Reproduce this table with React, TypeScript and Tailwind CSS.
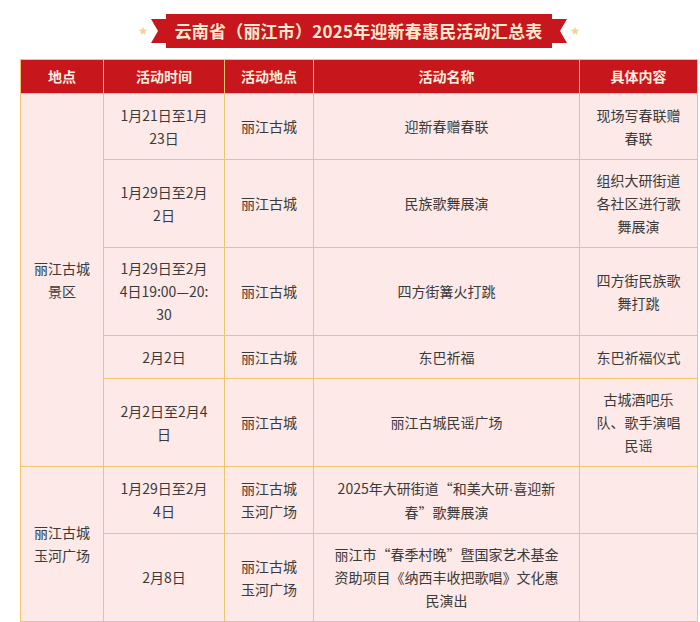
import React from "react";

const font = { fontFamily: '"Noto Sans CJK SC", "Noto Sans", sans-serif' };

const Star: React.FC = () => (
  <svg width="10" height="10" viewBox="0 0 24 24" className="shrink-0">
    <path
      d="M12 2l2.9 6.6 7.1.6-5.4 4.7 1.6 7.1L12 17.3 5.8 21l1.6-7.1L2 9.2l7.1-.6z"
      fill="#f1d39a"
    />
  </svg>
);

const Tail: React.FC<{ side: "left" | "right" }> = ({ side }) => (
  <svg width="15" height="24" viewBox="0 0 15 24" className="shrink-0">
    {side === "left" ? (
      <polygon points="0,0 15,0 15,24 0,24 7,12" fill="#c7161e" />
    ) : (
      <polygon points="0,0 15,0 8,12 15,24 0,24" fill="#c7161e" />
    )}
  </svg>
);

type Row = {
  time: React.ReactNode;
  place: React.ReactNode;
  name: React.ReactNode;
  detail: React.ReactNode;
  h: string;
};

const rows: Row[] = [
  { time: <>1月21日至1月<br />23日</>, place: "丽江古城", name: "迎新春赠春联", detail: <>现场写春联赠<br />春联</>, h: "h-[66px]" },
  { time: <>1月29日至2月<br />2日</>, place: "丽江古城", name: "民族歌舞展演", detail: <>组织大研街道<br />各社区进行歌<br />舞展演</>, h: "h-[88px]" },
  { time: <>1月29日至2月<br />4日19:00—20:<br />30</>, place: "丽江古城", name: "四方街篝火打跳", detail: <>四方街民族歌<br />舞打跳</>, h: "h-[88px]" },
  { time: "2月2日", place: "丽江古城", name: "东巴祈福", detail: "东巴祈福仪式", h: "h-[43px]" },
  { time: <>2月2日至2月4<br />日</>, place: "丽江古城", name: "丽江古城民谣广场", detail: <>古城酒吧乐<br />队、歌手演唱<br />民谣</>, h: "h-[88px]" },
  {
    time: <>1月29日至2月<br />4日</>,
    place: <>丽江古城<br />玉河广场</>,
    name: (
      <>
        2025年大研街道“和美大研<span className="font-['Liberation_Sans']">·</span>喜迎新<br />春”歌舞展演
      </>
    ),
    detail: "",
    h: "h-[67px]",
  },
  { time: "2月8日", place: <>丽江古城<br />玉河广场</>, name: <>丽江市“春季村晚”暨国家艺术基金<br />资助项目《纳西丰收把歌唱》文化惠<br />民演出</>, detail: "", h: "h-[88px]" },
];

const td = "border border-[#f0c46c] text-center align-middle px-2 text-[14px] leading-[23px] text-[#3a3a3a]";
const th = "border border-[#f0c46c] text-center align-middle text-[14px] font-bold text-[#ffeedd] h-[34px]";

export default function App() {
  return (
    <div className="min-h-screen bg-white" style={font}>
      <div className="ml-[20px] w-[677px] pt-[14px]">
        <div className="flex items-center justify-center">
          <Star />
          <div className="w-[3px]" />
          <Tail side="left" />
          <div className="h-[34px] w-[386px] bg-[#c7161e] flex items-center justify-center text-[17px] font-bold text-[#ffeacf] tracking-[0.2px]">
            云南省（丽江市）2025年迎新春惠民活动汇总表
          </div>
          <Tail side="right" />
          <div className="w-[3px]" />
          <Star />
        </div>
        <table className="mt-[11px] w-[677px] table-fixed border-collapse bg-[#fde9e8]">
          <colgroup>
            <col className="w-[83px]" />
            <col className="w-[121px]" />
            <col className="w-[89px]" />
            <col className="w-[266px]" />
            <col className="w-[118px]" />
          </colgroup>
          <thead>
            <tr className="bg-[#c8161d]">
              <th className={th}>地点</th>
              <th className={th}>活动时间</th>
              <th className={th}>活动地点</th>
              <th className={th}>活动名称</th>
              <th className={th}>具体内容</th>
            </tr>
          </thead>
          <tbody>
            {rows.map((r, i) => (
              <tr key={i}>
                {i === 0 && (
                  <td rowSpan={5} className={td}>
                    丽江古城<br />景区
                  </td>
                )}
                {i === 5 && (
                  <td rowSpan={2} className={td}>
                    丽江古城<br />玉河广场
                  </td>
                )}
                <td className={`${td} ${r.h}`}>{r.time}</td>
                <td className={td}>{r.place}</td>
                <td className={td}>{r.name}</td>
                <td className={td}>{r.detail}</td>
              </tr>
            ))}
          </tbody>
        </table>
      </div>
    </div>
  );
}
